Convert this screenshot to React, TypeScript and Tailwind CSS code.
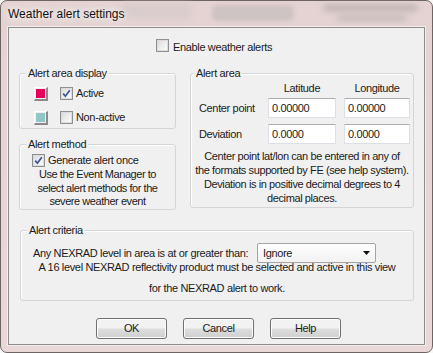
import React from "react";

function Check({ checked }: { checked?: boolean }) {
  return (
    <span className="flex h-[13px] w-[13px] shrink-0 items-center justify-center border border-[#8e8f8f] bg-white">
      <span className="flex h-[11px] w-[11px] items-center justify-center border border-[#dcdcdc] bg-gradient-to-br from-[#dedede] to-[#fbfbfb]">
        {checked && (
          <svg width="9" height="9" viewBox="0 0 9 9">
            <path d="M1.2 4.6 L3.4 7.2 L7.8 1.2" fill="none" stroke="#3e5296" strokeWidth="1.7" />
          </svg>
        )}
      </span>
    </span>
  );
}

function Swatch({ color }: { color: string }) {
  return (
    <span className="flex h-[14px] w-[14px] shrink-0 border-b-2 border-r-2 border-b-[#8a8a8a] border-r-[#8a8a8a] border-l border-t border-l-white border-t-white">
      <span className={`m-[1px] flex-1 ${color}`} />
    </span>
  );
}

function Group({
  title,
  className,
  titleLeft = "left-[6px]",
  children,
}: {
  title: string;
  className?: string;
  titleLeft?: string;
  children?: React.ReactNode;
}) {
  return (
    <div className={`relative rounded-[3px] border border-[#d5d5d5] shadow-[inset_1px_1px_0_#fff] ${className ?? ""}`}>
      <span className={`absolute top-[-8px] bg-[#f0f0f0] px-[2px] leading-[14px] ${titleLeft}`}>{title}</span>
      {children}
    </div>
  );
}

function Field({ value, className }: { value: string; className?: string }) {
  return (
    <div className={`flex h-[20px] items-center border border-[#dbdfe6] border-t-[#abadb3] bg-white pl-[3px] ${className ?? ""}`}>
      {value}
    </div>
  );
}

function Button({ label }: { label: string }) {
  return (
    <div className="flex h-[21px] w-[71px] items-center justify-center rounded-[3px] border border-[#707070] bg-gradient-to-b from-[#f2f2f2] from-45% via-[#dddddd] via-55% to-[#cfcfcf] shadow-[inset_0_0_0_1px_#fcfcfc]">
      {label}
    </div>
  );
}

export default function App() {
  return (
    <div className="relative h-[353px] w-[433px] overflow-hidden bg-[#f7f7f7] font-['Liberation_Sans',Arial,sans-serif] text-[11px] tracking-[-0.35px] text-[#1b1b1b]">
      <div className="relative h-full w-full rounded-[7px] border border-[#6f6464] bg-gradient-to-b from-[#e4d3d2] to-[#ead8d8]">
        {/* glass blur behind title bar */}
        <div className="absolute left-[120px] top-[3px] h-[14px] w-[70px] rounded bg-[#d9cccc] blur-[3px]" />
        <div className="absolute left-[212px] top-[5px] h-[14px] w-[80px] rounded border border-[#b9aeae] bg-[#cfc4c4] blur-[2px]" />
        <div className="absolute left-[322px] top-[4px] h-[6px] w-[95px] rounded bg-[#bcb0b0] blur-[3px]" />
        <div className="absolute left-[336px] top-[14px] h-[6px] w-[70px] rounded bg-[#c4b8b8] blur-[3px]" />

        <div className="relative pl-[7px] pt-[5px] text-[12px] leading-[16px] tracking-normal text-[#111] [text-shadow:0_0_6px_#fff,0_0_10px_#fff]">
          Weather alert settings
        </div>

        <div className="relative ml-[7px] mt-[5px] h-[318px] w-[417px] border border-[#8c8c8c] bg-[#f0f0f0] shadow-[0_0_0_1px_#f6eeee]">
          {/* enable */}
          <div className="mt-[11px] flex h-[13px] items-center gap-[4px] pl-[147px]">
            <Check />
            <span className="mt-[3px]">Enable weather alerts</span>
          </div>

          <div className="mt-[21px] flex gap-[14px] pl-[10px]">
            <div className="flex w-[157px] flex-col gap-[15px]">
              <Group title="Alert area display" className="h-[56px]">
                <div className="flex flex-col gap-[11px] pl-[14px] pt-[13px]">
                  <div className="flex h-[13px] items-center">
                    <Swatch color="bg-[#e8005c]" />
                    <span className="ml-[12px]">
                      <Check checked />
                    </span>
                    <span className="ml-[3px]">Active</span>
                  </div>
                  <div className="flex h-[13px] items-center">
                    <Swatch color="bg-[#8fc6c8]" />
                    <span className="ml-[12px]">
                      <Check />
                    </span>
                    <span className="ml-[3px]">Non-active</span>
                  </div>
                </div>
              </Group>
              <Group title="Alert method" className="h-[66px]">
                <div className="mt-[9px] flex h-[13px] items-center gap-[3px] pl-[12px]">
                  <Check checked />
                  <span>Generate alert once</span>
                </div>
                <div className="mt-[1px] whitespace-nowrap text-center leading-[13.5px] tracking-[-0.45px]">
                  Use the Event Manager to
                  <br />
                  select alert methods for the
                  <br />
                  severe weather event
                </div>
              </Group>
            </div>

            <Group title="Alert area" className="h-[135px] w-[224px]" titleLeft="left-[3px]">
              <div className="grid grid-cols-[61px_68px_66px] gap-x-[8px] pl-[8px] pt-[7px]">
                <span />
                <span className="text-center leading-[14px]">Latitude</span>
                <span className="text-center leading-[14px]">Longitude</span>
              </div>
              <div className="mt-[3px] grid grid-cols-[61px_68px_66px] items-center gap-x-[8px] gap-y-[6px] pl-[8px]">
                <span>Center point</span>
                <Field value="0.00000" />
                <Field value="0.00000" />
                <span>Deviation</span>
                <Field value="0.0000" />
                <Field value="0.0000" />
              </div>
              <div className="mt-[5px] whitespace-nowrap text-center leading-[14px] tracking-[-0.4px]">
                Center point lat/lon can be entered in any of
                <br />
                the formats supported by FE (see help system).
                <br />
                Deviation is in positive decimal degrees to 4
                <br />
                decimal places.
              </div>
            </Group>
          </div>

          <Group title="Alert criteria" className="ml-[11px] mt-[20px] h-[71px] w-[394px]">
            <div className="flex items-center pl-[12px] pt-[12px]">
              <span>Any NEXRAD level in area is at or greater than:</span>
              <div className="ml-auto mr-[37px] flex h-[20px] w-[119px] items-center justify-between rounded-[2px] border border-[#a5a5a5] bg-gradient-to-b from-white to-[#f2f2f2] pl-[5px] pr-[5px]">
                <span>Ignore</span>
                <svg width="7" height="4" viewBox="0 0 7 4">
                  <path d="M0 0 H7 L3.5 4 Z" fill="#111" />
                </svg>
              </div>
            </div>
            <div className="mt-[-6px] text-center leading-[21px]">
              A 16 level NEXRAD reflectivity product must be selected and active in this view
              <br />
              for the NEXRAD alert to work.
            </div>
          </Group>

          <div className="mt-[17px] flex gap-[16px] pl-[87px]">
            <Button label="OK" />
            <Button label="Cancel" />
            <Button label="Help" />
          </div>
        </div>
      </div>
    </div>
  );
}
